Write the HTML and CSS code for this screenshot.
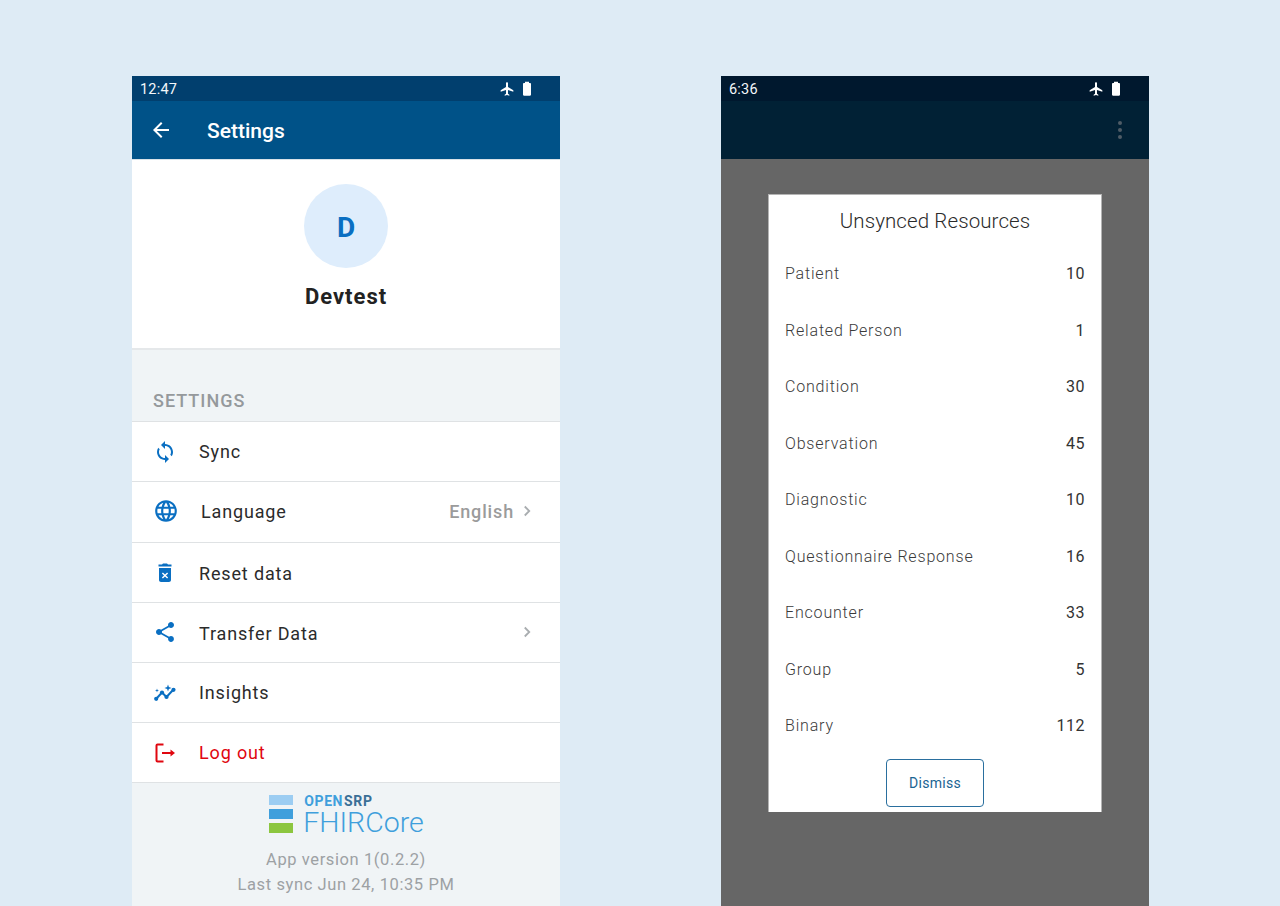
FILE: index.html
```html
<!DOCTYPE html>
<html lang="en">
<head>
  <meta charset="UTF-8">
  <title>Settings and Unsynced Resources</title>
  <link rel="stylesheet" href="styles.css">
</head>
<body>
  <div class="screens">
    <section class="phone">
      <div class="status-bar">
        <span>12:47</span>
        <div class="status-icons">
          <svg width="16" height="16" viewBox="0 0 24 24"><path fill="#fff" d="M21 16v-2l-8-5V3.5C13 2.67 12.33 2 11.5 2S10 2.67 10 3.5V9l-8 5v2l8-2.5V19l-2 1.5V22l3.5-1 3.5 1v-1.5L13 19v-5.5l8 2.5z" transform="translate(.5 0)"/></svg>
          <svg width="16" height="16" viewBox="0 0 24 24"><path fill="#fff" d="M16.7 3H15V1H9v2H7.3C6.6 3 6 3.6 6 4.3v16.4c0 .7.6 1.3 1.3 1.3h9.4c.7 0 1.3-.6 1.3-1.3V4.3C18 3.6 17.4 3 16.7 3z"/></svg>
        </div>
      </div>
      <header class="app-bar">
        <svg class="back" width="24" height="24" viewBox="0 0 24 24"><path fill="#fff" d="M20 11H7.83l5.59-5.59L12 4l-8 8 8 8 1.41-1.41L7.83 13H20v-2z"/></svg>
        <h1>Settings</h1>
      </header>

      <div class="profile">
        <div class="avatar">D</div>
        <div class="profile-name">Devtest</div>
      </div>

      <h2 class="section-title">SETTINGS</h2>
      <ul class="menu">
        <li class="menu-row">
          <svg class="menu-icon" width="24" height="24" viewBox="0 0 24 24"><path fill="#0a6fc2" d="M12 4V1L8 5l4 4V6c3.31 0 6 2.69 6 6 0 1.01-.25 1.97-.7 2.8l1.46 1.46C19.54 15.03 20 13.57 20 12c0-4.42-3.58-8-8-8zm0 14c-3.31 0-6-2.69-6-6 0-1.01.25-1.97.7-2.8L5.24 7.74C4.46 8.97 4 10.43 4 12c0 4.42 3.58 8 8 8v3l4-4-4-4v3z"/></svg>
          <span class="menu-label">Sync</span>
        </li>
        <li class="menu-row menu-row-tall">
          <svg class="menu-icon" width="26" height="26" viewBox="0 0 24 24"><path fill="#0a6fc2" d="M11.99 2C6.47 2 2 6.48 2 12s4.47 10 9.99 10C17.52 22 22 17.52 22 12S17.52 2 11.99 2zm6.93 6h-2.95c-.32-1.25-.78-2.45-1.38-3.56 1.84.63 3.37 1.91 4.33 3.56zM12 4.04c.83 1.2 1.48 2.53 1.91 3.96h-3.82c.43-1.43 1.08-2.76 1.91-3.96zM4.26 14C4.1 13.36 4 12.69 4 12s.1-1.36.26-2h3.38c-.08.66-.14 1.32-.14 2s.06 1.34.14 2H4.26zm.82 2h2.95c.32 1.25.78 2.45 1.38 3.56-1.84-.63-3.37-1.9-4.33-3.56zm2.95-8H5.08c.96-1.66 2.49-2.93 4.33-3.56C8.81 5.55 8.35 6.75 8.03 8zM12 19.96c-.83-1.2-1.48-2.53-1.91-3.96h3.82c-.43 1.43-1.08 2.76-1.91 3.96zM14.34 14H9.66c-.09-.66-.16-1.32-.16-2s.07-1.35.16-2h4.68c.09.65.16 1.32.16 2s-.07 1.34-.16 2zm.25 5.56c.6-1.11 1.06-2.31 1.38-3.56h2.95c-.96 1.65-2.49 2.93-4.33 3.56zM16.36 14c.08-.66.14-1.32.14-2s-.06-1.34-.14-2h3.38c.16.64.26 1.31.26 2s-.1 1.36-.26 2h-3.38z"/></svg>
          <span class="menu-label">Language</span>
          <span class="menu-value">English</span>
          <svg class="chevron" width="18" height="18" viewBox="0 0 24 24"><path fill="none" stroke="#a9adb0" stroke-width="2.4" d="M9 6l6 6-6 6"/></svg>
        </li>
        <li class="menu-row menu-row-low">
          <svg class="menu-icon" width="24" height="24" viewBox="0 0 24 24"><path fill="#0a6fc2" fill-rule="evenodd" d="M15 3.5 14 2.5h-4l-1 1H5.500v2h13v-2zM6 7v12c0 1.100.9 2 2 2h8c1.100 0 2-.9 2-2V7zm3.900 4.400 2.100 2.100 2.100-2.100 1 1L13 14.500l2.100 2.100-1 1L12 15.500l-2.100 2.100-1-1 2.100-2.100-2.100-2.100z"/></svg>
          <span class="menu-label">Reset data</span>
        </li>
        <li class="menu-row menu-row-low menu-row-share">
          <svg class="menu-icon" width="24" height="24" viewBox="0 0 24 24"><path fill="#0a6fc2" d="M18 16.08c-.76 0-1.44.3-1.96.77L8.91 12.7c.05-.23.09-.46.09-.7s-.04-.47-.09-.7l7.05-4.11c.54.5 1.25.81 2.04.81 1.66 0 3-1.34 3-3s-1.34-3-3-3-3 1.34-3 3c0 .24.04.47.09.7L8.04 9.81C7.5 9.31 6.79 9 6 9c-1.66 0-3 1.34-3 3s1.34 3 3 3c.79 0 1.5-.31 2.04-.81l7.12 4.16c-.05.21-.08.43-.08.65 0 1.61 1.31 2.92 2.92 2.92s2.92-1.31 2.92-2.92-1.31-2.92-2.92-2.92z"/></svg>
          <span class="menu-label">Transfer Data</span>
          <svg class="chevron" width="18" height="18" viewBox="0 0 24 24"><path fill="none" stroke="#a9adb0" stroke-width="2.4" d="M9 6l6 6-6 6"/></svg>
        </li>
        <li class="menu-row">
          <svg class="menu-icon" width="24" height="24" viewBox="0 0 24 24"><path fill="none" stroke="#0a6fc2" stroke-width="2" d="M3.500 17.500 9 11.500l4.500 4.500 6.500-7"/><circle cx="3.200" cy="17.800" r="2.100" fill="#0a6fc2"/><circle cx="9" cy="11.500" r="2.100" fill="#0a6fc2"/><circle cx="13.500" cy="16" r="2.100" fill="#0a6fc2"/><circle cx="20.500" cy="8.800" r="2.100" fill="#0a6fc2"/><path fill="#0a6fc2" d="M15 3.500l.9 2.600 2.600.9-2.600.9-.9 2.600-.9-2.600-2.600-.9 2.600-.9zM4 7.500l.5 1.500 1.500.5-1.500.5L4 11.500l-.5-1.500L2 9.500l1.500-.5z"/></svg>
          <span class="menu-label">Insights</span>
        </li>
        <li class="menu-row menu-row-logout">
          <svg class="menu-icon" width="24" height="24" viewBox="0 0 24 24"><path fill="none" stroke="#e0060f" stroke-width="2" d="M10.500 3.500H4.500a1 1 0 0 0-1 1v15a1 1 0 0 0 1 1h6M9 12h10"/><path fill="#e0060f" d="M17.500 8.500 22 12l-4.500 3.500z"/></svg>
          <span class="menu-label">Log out</span>
        </li>
      </ul>

      <footer class="brand">
        <div class="logo">
          <div class="logo-bars">
            <span class="bar bar-light"></span>
            <span class="bar bar-mid"></span>
            <span class="bar bar-green"></span>
          </div>
          <div class="logo-text">
            <div class="logo-top"><span class="open">OPEN</span><span class="srp">SRP</span></div>
            <div class="logo-name">FHIRCore</div>
          </div>
        </div>
        <p class="version">App version 1(0.2.2)</p>
        <p class="version">Last sync Jun 24, 10:35 PM</p>
      </footer>
    </section>

    <section class="phone phone-dimmed">
      <div class="status-bar">
        <span>6:36</span>
        <div class="status-icons">
          <svg width="16" height="16" viewBox="0 0 24 24"><path fill="#fff" d="M21 16v-2l-8-5V3.5C13 2.67 12.33 2 11.5 2S10 2.67 10 3.5V9l-8 5v2l8-2.5V19l-2 1.5V22l3.5-1 3.5 1v-1.5L13 19v-5.5l8 2.5z" transform="translate(.5 0)"/></svg>
          <svg width="16" height="16" viewBox="0 0 24 24"><path fill="#fff" d="M16.7 3H15V1H9v2H7.3C6.6 3 6 3.6 6 4.3v16.4c0 .7.6 1.3 1.3 1.3h9.4c.7 0 1.3-.6 1.3-1.3V4.3C18 3.6 17.4 3 16.7 3z"/></svg>
        </div>
      </div>
      <header class="app-bar">
        <div class="overflow-dots"><span></span><span></span><span></span></div>
      </header>
      <div class="scrim">
        <div class="dialog">
          <h2 class="dialog-title">Unsynced Resources</h2>
          <ul class="resources">
            <li><span>Patient</span><span class="count">10</span></li>
            <li><span>Related Person</span><span class="count">1</span></li>
            <li><span>Condition</span><span class="count">30</span></li>
            <li><span>Observation</span><span class="count">45</span></li>
            <li><span>Diagnostic</span><span class="count">10</span></li>
            <li><span>Questionnaire Response</span><span class="count">16</span></li>
            <li><span>Encounter</span><span class="count">33</span></li>
            <li><span>Group</span><span class="count">5</span></li>
            <li><span>Binary</span><span class="count">112</span></li>
          </ul>
          <button class="dismiss">Dismiss</button>
        </div>
      </div>
    </section>
  </div>
</body>
</html>
```

FILE: styles.css
```css
html, body { height: 100%; }
body { margin: 0; background-color: #deebf5; font-family: Roboto, "Liberation Sans", sans-serif; overflow: hidden; }
ul { list-style: none; margin: 0; padding: 0; }
h1, h2, p { margin: 0; font-weight: normal; }

.screens { display: flex; gap: 161px; padding: 76px 0 0 132px; }
.phone { width: 428px; height: 830px; display: flex; flex-direction: column; background-color: #f0f4f6; overflow: hidden; }

.status-bar { height: 25px; flex: none; display: flex; align-items: center; justify-content: space-between; box-sizing: border-box; padding: 1px 25px 0 8px; background-color: #013f6e; color: #f4f7fa; font-size: 14.5px; letter-spacing: 0.2px; }
.status-icons { display: flex; gap: 4px; align-items: center; }

.app-bar { height: 58px; flex: none; display: flex; align-items: center; background-color: #005288; border-bottom: 1px solid #d9e2e8; }
.back { margin-left: 17px; }
.app-bar h1 { margin-left: 34px; padding-top: 2px; color: #fff; font-size: 21px; font-weight: 500; }

.profile { height: 190px; flex: none; display: flex; flex-direction: column; align-items: center; box-sizing: border-box; padding-top: 24px; background-color: #fff; border-bottom: 2px solid #e5e8ea; }
.avatar { width: 84px; height: 84px; box-sizing: border-box; padding-top: 2px; border-radius: 50%; display: flex; align-items: center; justify-content: center; background-color: #deedfc; color: #0a6fc2; font-size: 28px; font-weight: 700; }
.profile-name { margin-top: 16px; color: #222; font-size: 22px; font-weight: 700; letter-spacing: 1px; }

.section-title { height: 71px; flex: none; box-sizing: border-box; padding: 40px 0 0 21px; color: #95999c; font-size: 18px; font-weight: 500; letter-spacing: 1px; line-height: 22px; }

.menu { flex: none; background-color: #fff; border-top: 1px solid #dfe2e4; }
.menu-row { height: 59px; display: flex; align-items: center; padding: 0 24px 0 21px; color: #2b2b2b; font-size: 18px; letter-spacing: 0.85px; border-bottom: 1px solid #dfe2e4; }
.menu-row-tall { height: 58px; padding-bottom: 2px; }
.menu-row-low .menu-label { padding-top: 2px; }
.menu-row-share .menu-icon, .menu-row-share .chevron { margin-bottom: 2px; }
.menu-row-logout { color: #e0060f; }
.menu-icon { flex: none; margin-right: 22px; }
.menu-label { flex: 1; }
.menu-value { color: #9b9b9b; font-weight: 500; margin-right: 4px; }
.chevron { flex: none; }

.brand { flex: 1; display: flex; flex-direction: column; align-items: center; padding-top: 12px; }
.logo { display: flex; gap: 10px; margin: 0 0 10px 1px; }
.logo-bars { display: flex; flex-direction: column; gap: 4px; }
.bar { display: block; width: 24px; height: 10px; }
.bar-light { background-color: #9ccdf2; }
.bar-mid { background-color: #3f9fdc; }
.bar-green { background-color: #8cc63f; }
.logo-top { margin-left: 1px; font-size: 14px; font-weight: 700; line-height: 12px; letter-spacing: 0.6px; }
.open { color: #3f9fdc; margin-right: 1px; }
.srp { color: #3a6f96; }
.logo-name { margin-top: 2px; color: #3f9fdc; font-size: 28.5px; font-weight: 300; line-height: 28px; }
.version { color: #9da1a4; font-size: 16.5px; line-height: 25px; letter-spacing: 0.6px; }

.phone-dimmed .status-bar { background-color: #00182e; }
.phone-dimmed .app-bar { background-color: #012135; border-bottom: 0; }
.overflow-dots { margin-left: auto; margin-right: 27px; display: flex; flex-direction: column; gap: 3px; }
.overflow-dots span { width: 4px; height: 4px; border-radius: 50%; background-color: #4f5c66; }
.scrim { flex: 1; background-color: #666; padding: 35px 47px 0 47px; }
.dialog { height: 618px; display: flex; flex-direction: column; align-items: center; box-sizing: border-box; background-color: #fff; border: 1px solid #b4b4b4; border-width: 1px 1px 0 1px; }
.dialog-title { margin-top: 13px; color: #2a2a2a; font-size: 20.5px; font-weight: 300; line-height: 26px; letter-spacing: 0.1px; }
.resources { width: 100%; box-sizing: border-box; padding: 11.5px 16px 0; }
.resources li { height: 56.5px; display: flex; align-items: center; justify-content: space-between; color: #3a3a3a; font-size: 16px; font-weight: 300; letter-spacing: 0.82px; }
.resources .count { color: #333; font-weight: 400; letter-spacing: 0.5px; }
.dismiss { width: 98px; height: 48px; margin-top: 4.5px; padding-top: 2px; background-color: #fff; border: 1px solid #2a6f9e; border-radius: 4px; color: #1a6493; font-family: Roboto, "Liberation Sans", sans-serif; font-size: 14px; letter-spacing: 0.3px; }
```
